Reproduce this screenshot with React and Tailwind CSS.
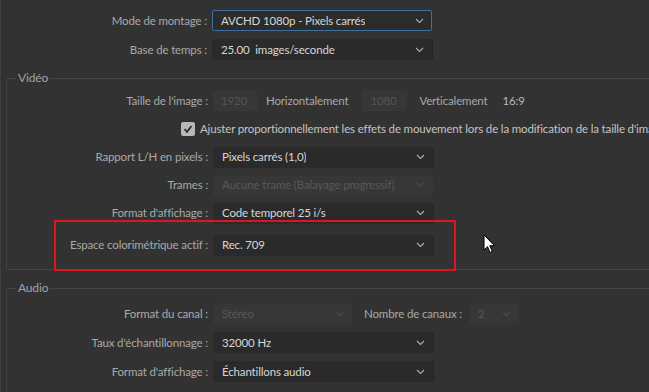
import React from "react";

const font = { fontFamily: 'Lato, "Noto Sans", sans-serif', letterSpacing: "-0.15px" };

function Chevron({ dim }) {
  return (
    <svg width="9" height="6" viewBox="0 0 9 6" className="shrink-0">
      <polyline
        points="1,1 4.5,4.5 8,1"
        fill="none"
        stroke={dim ? "#4a4a4a" : "#a8a8a8"}
        strokeWidth="1.2"
      />
    </svg>
  );
}

function Select({ value, focused, disabled, width = "w-[220px]" }) {
  return (
    <div
      className={`${width} h-[21px] flex items-center justify-between pl-[8px] pr-[7px] rounded-[2px] border ${
        focused
          ? "border-[#3f6f9c] bg-[#2b2b2b]"
          : disabled
          ? "border-[#363636] bg-[#373737]"
          : "border-[#2a2a2a] bg-[#2a2a2a] shadow-[1px_0_0_#262626]"
      }`}
    >
      <span
        className={`truncate whitespace-pre ${disabled ? "text-[#575757]" : "text-[#d6d6d6]"}`}
      >
        {value}
      </span>
      <Chevron dim={disabled} />
    </div>
  );
}

function Label({ children }) {
  return (
    <div className="w-[212px] shrink-0 text-right pr-[5px] text-[#a9a9a9] whitespace-nowrap">
      {children}
    </div>
  );
}

function Row({ label, children, h = "h-[29px]" }) {
  return (
    <div className={`${h} flex items-center`}>
      <Label>{label}</Label>
      {children}
    </div>
  );
}

function Group({ title, children, className = "" }) {
  return (
    <div
      className={`relative ml-[5px] w-[700px] border border-[#444] rounded-[2px] ${className}`}
    >
      <div className="absolute -top-[10px] left-[9px] px-[2px] bg-[#323232] text-[#a3a3a3] leading-[18px] text-[12px]">
        {title}
      </div>
      {children}
    </div>
  );
}

export default function App() {
  return (
    <div
      className="relative w-[649px] h-[392px] overflow-hidden bg-[#323232] text-[11.5px] border-l border-[#3e3e3e]"
      style={font}
    >
      <div className="pt-[6px] -ml-px">
        <Row label="Mode de montage :">
          <Select value="AVCHD 1080p - Pixels carrés" focused />
        </Row>
        <Row label="Base de temps :">
          <Select value="25.00  images/seconde" />
        </Row>
      </div>

      <Group title="Vidéo" className="mt-[14px] -ml-px pt-[8px] pb-[10px]">
        <div className="-ml-[6px]">
          <Row label="Taille de l'image :" h="h-[28px]">
            <div className="w-[44px] h-[20px] bg-[#373737] text-[#545454] flex items-center pl-[8px]">
              1920
            </div>
            <span className="ml-[9px] text-[#a9a9a9]">Horizontalement</span>
            <div className="ml-[14px] w-[45px] h-[20px] bg-[#373737] text-[#545454] flex items-center pl-[8px]">
              1080
            </div>
            <span className="ml-[12px] text-[#a9a9a9]">Verticalement</span>
            <span className="ml-[15px] text-[#b9b9b9]">16:9</span>
          </Row>
          <div className="h-[28px] flex items-center pl-[180px] whitespace-nowrap">
            <div className="w-[14px] h-[14px] rounded-[2px] bg-[#b8b8b8] flex items-center justify-center shrink-0">
              <svg width="10" height="10" viewBox="0 0 10 10">
                <polyline
                  points="1.5,5.2 4,7.8 8.5,2"
                  fill="none"
                  stroke="#2e2e2e"
                  strokeWidth="1.8"
                />
              </svg>
            </div>
            <span className="ml-[5px] text-[#c4c4c4]">
              Ajuster proportionnellement les effets de mouvement lors de la
              modification de la taille d'image
            </span>
          </div>
          <Row label="Rapport L/H en pixels :" h="h-[28px]">
            <Select value="Pixels carrés (1,0)" />
          </Row>
          <Row label="Trames :" h="h-[28px]">
            <Select value="Aucune trame (Balayage progressif)" disabled />
          </Row>
          <Row label="Format d'affichage :" h="h-[28px]">
            <Select value="Code temporel 25 i/s" />
          </Row>
          <div className="mt-[4px]">
            <Row label="Espace colorimétrique actif :" h="h-[28px]">
              <Select value="Rec. 709" />
            </Row>
          </div>
        </div>
      </Group>

      <Group title="Audio" className="mt-[18px] -ml-px pt-[10px] pb-[10px]">
        <div className="-ml-[6px]">
          <Row label="Format du canal :">
            <Select value="Stéréo" disabled width="w-[139px]" />
            <span className="ml-[12px] text-[#a9a9a9]">Nombre de canaux :</span>
            <div className="ml-[7px]">
              <Select value="2" disabled width="w-[50px]" />
            </div>
          </Row>
          <Row label="Taux d'échantillonnage :">
            <Select value="32000 Hz" />
          </Row>
          <Row label="Format d'affichage :">
            <Select value="Échantillons audio" />
          </Row>
        </div>
      </Group>

      {/* annotation */}
      <div className="absolute left-[53px] top-[220px] w-[402px] h-[51px] border-2 border-[#e0141e]" />

      {/* mouse cursor */}
      <svg
        className="absolute left-[482px] top-[234px]"
        width="14"
        height="21"
        viewBox="0 0 14 21"
      >
        <path
          d="M1 1 L1 16 L4.5 12.5 L7 18.5 L9.3 17.5 L6.8 11.7 L11.5 11.7 Z"
          fill="#fff"
          stroke="#000"
          strokeWidth="1"
          strokeLinejoin="round"
        />
      </svg>
    </div>
  );
}
